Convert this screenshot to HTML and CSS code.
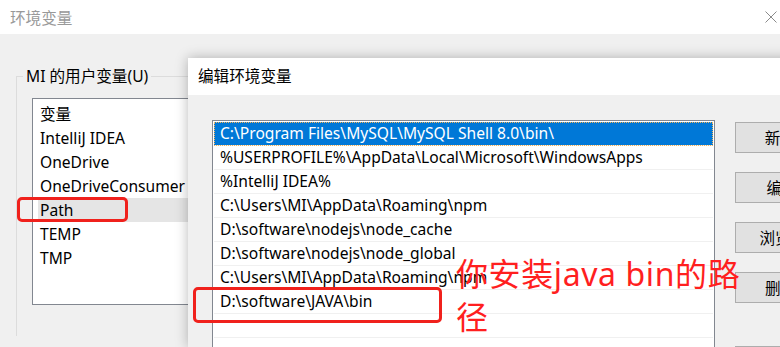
FILE: index.html
```html
<!DOCTYPE html>
<html lang="zh-CN">
<head>
  <meta charset="UTF-8">
  <meta name="viewport" content="width=device-width, initial-scale=1.0">
  <title>环境变量</title>
  <link rel="stylesheet" href="styles.css">
</head>
<body>
  <!-- 底层窗口: 环境变量 -->
  <div class="win">
    <div class="win_title">
      <span>环境变量</span>
      <svg class="close" width="12" height="12" viewBox="0 0 12 12"><path d="M0.5 0.5L11.5 11.5M11.5 0.5L0.5 11.5" stroke="#8a8a8a" stroke-width="1" fill="none"/></svg>
    </div>
    <div class="win_body">
      <fieldset class="group">
        <legend>MI 的用户变量(U)</legend>
        <ul class="var_list">
          <li>变量</li>
          <li>IntelliJ IDEA</li>
          <li>OneDrive</li>
          <li>OneDriveConsumer</li>
          <li class="hover">Path</li>
          <li>TEMP</li>
          <li>TMP</li>
        </ul>
      </fieldset>
    </div>
  </div>

  <!-- 위에 뜬 창: 编辑环境变量 -->
  <div class="dlg">
    <div class="dlg_title">编辑环境变量</div>
    <div class="dlg_body">
      <ul class="path_list">
        <li class="on">C:\Program Files\MySQL\MySQL Shell 8.0\bin\</li>
        <li>%USERPROFILE%\AppData\Local\Microsoft\WindowsApps</li>
        <li>%IntelliJ IDEA%</li>
        <li>C:\Users\MI\AppData\Roaming\npm</li>
        <li>D:\software\nodejs\node_cache</li>
        <li>D:\software\nodejs\node_global</li>
        <li>C:\Users\MI\AppData\Roaming\npm</li>
        <li>D:\software\JAVA\bin</li>
        <li></li>
        <li></li>
      </ul>
      <div class="btns">
        <button class="btn">新建(N)</button>
        <button class="btn">编辑(E)</button>
        <button class="btn">浏览(B)...</button>
        <button class="btn">删除(D)</button>
        <button class="btn btn_gap">上移(U)</button>
      </div>
    </div>
  </div>

  <!-- 빨간 표시 -->
  <div class="mark mark_path"></div>
  <div class="mark mark_java"></div>
  <p class="note">你安装java bin的路<br>径</p>
</body>
</html>
```

FILE: styles.css
```css
* {margin: 0;padding: 0;list-style: none;box-sizing: border-box;}
body {width: 780px;height: 347px;overflow: hidden;position: relative;background-color: #f0f0f0;font-family: "Noto Sans", "Noto Sans CJK SC", sans-serif;font-size: 15.6px;color: #000;}

.win {height: 347px;overflow: hidden;}
.win_title {height: 34px;background-color: #fff;display: flex;align-items: center;justify-content: space-between;padding: 0 3px 0 10px;color: #999;}
.win_body {padding-top: 32px;}
.group {margin-left: 16px;height: 270px;border: none;border-top: 1px solid #dcdcdc;border-left: 1px solid #dcdcdc;padding: 0 0 0 6px;}
.group legend {padding: 0 3px;line-height: 20px;}
.var_list {margin: 12px 0 0 9px;width: 200px;height: 207px;border: 1px solid #828790;background-color: #fff;padding: 3px 0;}
.var_list li {height: 24px;line-height: 24px;margin-left: 5px;padding-left: 2px;white-space: nowrap;}
.var_list li.hover {background-color: #e5e5e5;}

.dlg {position: absolute;left: 188px;top: 58px;width: 620px;height: 289px;overflow: hidden;background-color: #f0f0f0;box-shadow: 0 0 12px rgba(0,0,0,0.28);}
.dlg_title {height: 37px;line-height: 37px;padding-left: 10px;background-color: #fff;}
.dlg_body {display: flex;align-items: flex-start;gap: 20px;padding: 25px 0 0 24px;}
.path_list {flex-shrink: 0;width: 503px;height: 260px;border: 1px solid #828790;background-color: #fff;padding: 1px;}
.path_list li {height: 24px;line-height: 23px;border-bottom: 1px solid #f0f0f0;padding-left: 6px;white-space: nowrap;}
.path_list li.on {background-color: #0078d7;color: #fff;outline: 1px dotted #f3b45a;outline-offset: -1px;}
.btns {flex-shrink: 0;display: flex;flex-direction: column;padding-top: 2px;}
.btn {width: 112px;height: 31px;margin-bottom: 19px;border: 1px solid #adadad;background-color: #e1e1e1;font: inherit;color: #000;text-align: center;white-space: nowrap;}
.btn_gap {margin-top: 24px;}

.mark {position: absolute;border: 3px solid #f0211c;border-radius: 5px;}
.mark_path {left: 17px;top: 197px;width: 111px;height: 25px;}
.mark_java {left: 193px;top: 287px;width: 249px;height: 36px;}
.note {position: absolute;left: 456px;top: 252px;font-size: 32px;letter-spacing: 0.6px;line-height: 43px;color: #ff1f1f;white-space: nowrap;}
```
